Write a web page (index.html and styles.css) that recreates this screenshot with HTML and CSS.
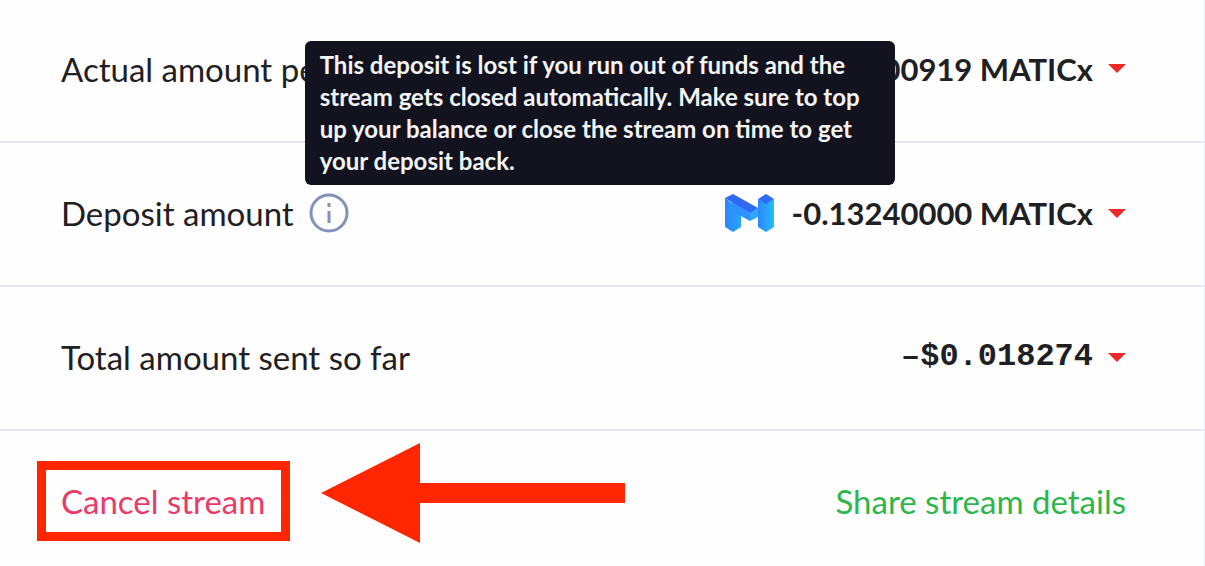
FILE: index.html
```html
<!DOCTYPE html>
<html lang="en">
<head>
<meta charset="utf-8">
<title>Stream details</title>
<link rel="stylesheet" href="styles.css">
</head>
<body>
<main class="panel">
  <div class="row">
    <span class="label">Actual amount pe</span>
    <button class="value" type="button">00919 MATICx <span class="caret"></span></button>
  </div>
  <div class="row">
    <div class="label-group">
      <span class="label">Deposit amount</span>
      <span class="info">
        <button class="info-button" type="button" aria-label="About the deposit" aria-describedby="deposit-tip">
          <svg width="40" height="40" viewBox="0 0 40 40" fill="none" stroke="#8292b8" stroke-width="3">
            <circle cx="20" cy="20" r="18"/>
            <path d="M20 18v12M20 10v4"/>
          </svg>
        </button>
        <span class="tooltip" id="deposit-tip" role="tooltip">This deposit is lost if you run out of funds and the stream gets closed automatically. Make sure to top up your balance or close the stream on time to get your deposit back.</span>
      </span>
    </div>
    <div class="amount">
      <svg class="token" width="49" height="38" viewBox="0 0 49 38" aria-hidden="true">
        <defs>
          <linearGradient id="left" x1="0" y1="0" x2="1" y2="0"><stop offset="0" stop-color="#2f86ff"/><stop offset="1" stop-color="#25a6ff"/></linearGradient>
          <linearGradient id="right" x1="0" y1="0" x2="1" y2="0"><stop offset="0" stop-color="#2e86fb"/><stop offset="1" stop-color="#22beff"/></linearGradient>
        </defs>
        <path fill="url(#left)" d="M0 4 7 9l9 5v19l-8 5-8-5z"/>
        <path fill="#2b92ff" d="M7 8l18 11v8l-9-5-9-5z"/>
        <path fill="#2fa8ff" d="M25 18l8-4v9l-8 4z"/>
        <path fill="#2f6af6" d="M0 4 8 0l25 14-8 5L8 9z"/>
        <path fill="url(#right)" d="M33 5l8 4 8-4v28l-8 5-8-5z"/>
        <path fill="#2f6af6" d="M33 5l8-5 8 5-8 5z"/>
      </svg>
      <button class="value" type="button">-0.13240000 MATICx <span class="caret"></span></button>
    </div>
  </div>
  <div class="row">
    <span class="label">Total amount sent so far</span>
    <button class="value mono" type="button">–$0.018274 <span class="caret"></span></button>
  </div>
  <div class="row">
    <div class="cancel-group">
      <button class="cancel" type="button">Cancel stream</button>
      <svg class="arrow" width="304" height="100" viewBox="0 0 304 100" aria-hidden="true">
        <path fill="#ff2600" d="M0 50 99 0v40h205v20H99v40z"/>
      </svg>
    </div>
    <a class="share" href="#">Share stream details</a>
  </div>
</main>
</body>
</html>
```
FILE: styles.css
```css
* { box-sizing: border-box; }

body {
  margin: 0;
  background: #fefefe;
  color: #1f2023;
  font-family: Lato, "Open Sans", sans-serif;
  font-size: 33px;
  line-height: 40px;
}

button {
  padding: 0;
  border: 0;
  background: none;
  color: inherit;
  font: inherit;
  cursor: pointer;
}

.panel { border-right: 1px solid #e9eefa; }

.row {
  display: flex;
  align-items: center;
  justify-content: space-between;
  height: 144px;
  padding: 0 78px 2px 61px;
  border-bottom: 2px solid #e3e9f8;
}

.row:first-child { height: 143px; padding-bottom: 4px; }
.row:last-child { height: 135px; border-bottom: 0; padding-top: 4px; padding-bottom: 0; }

.label-group, .amount, .value, .info { display: flex; align-items: center; }
.label-group { gap: 15px; }
.amount { gap: 18px; }

.value { gap: 15px; font-weight: 700; font-size: 31px; }
.mono { font-family: "Liberation Mono", monospace; font-size: 32px; }

.caret {
  border: 9px solid transparent;
  border-top-color: #ed2a25;
  border-bottom: 0;
}

.info { position: relative; }
.info-button { display: flex; }

.tooltip {
  position: absolute;
  z-index: 1;
  bottom: calc(100% + 8px);
  left: -4px;
  width: 590px;
  padding: 8px 15px;
  border-radius: 6px;
  background: #12131f;
  color: #f4f4f6;
  font-size: 24px;
  font-weight: 700;
  line-height: 32px;
}

.cancel-group { display: flex; align-items: center; gap: 31px; margin-left: -24px; }
.cancel { padding: 11px 16px 11px 15px; border: 9px solid #ff2600; color: #ea3a68; }
.arrow { margin-bottom: 16px; }
.share { color: #2db64b; text-decoration: none; }
```
